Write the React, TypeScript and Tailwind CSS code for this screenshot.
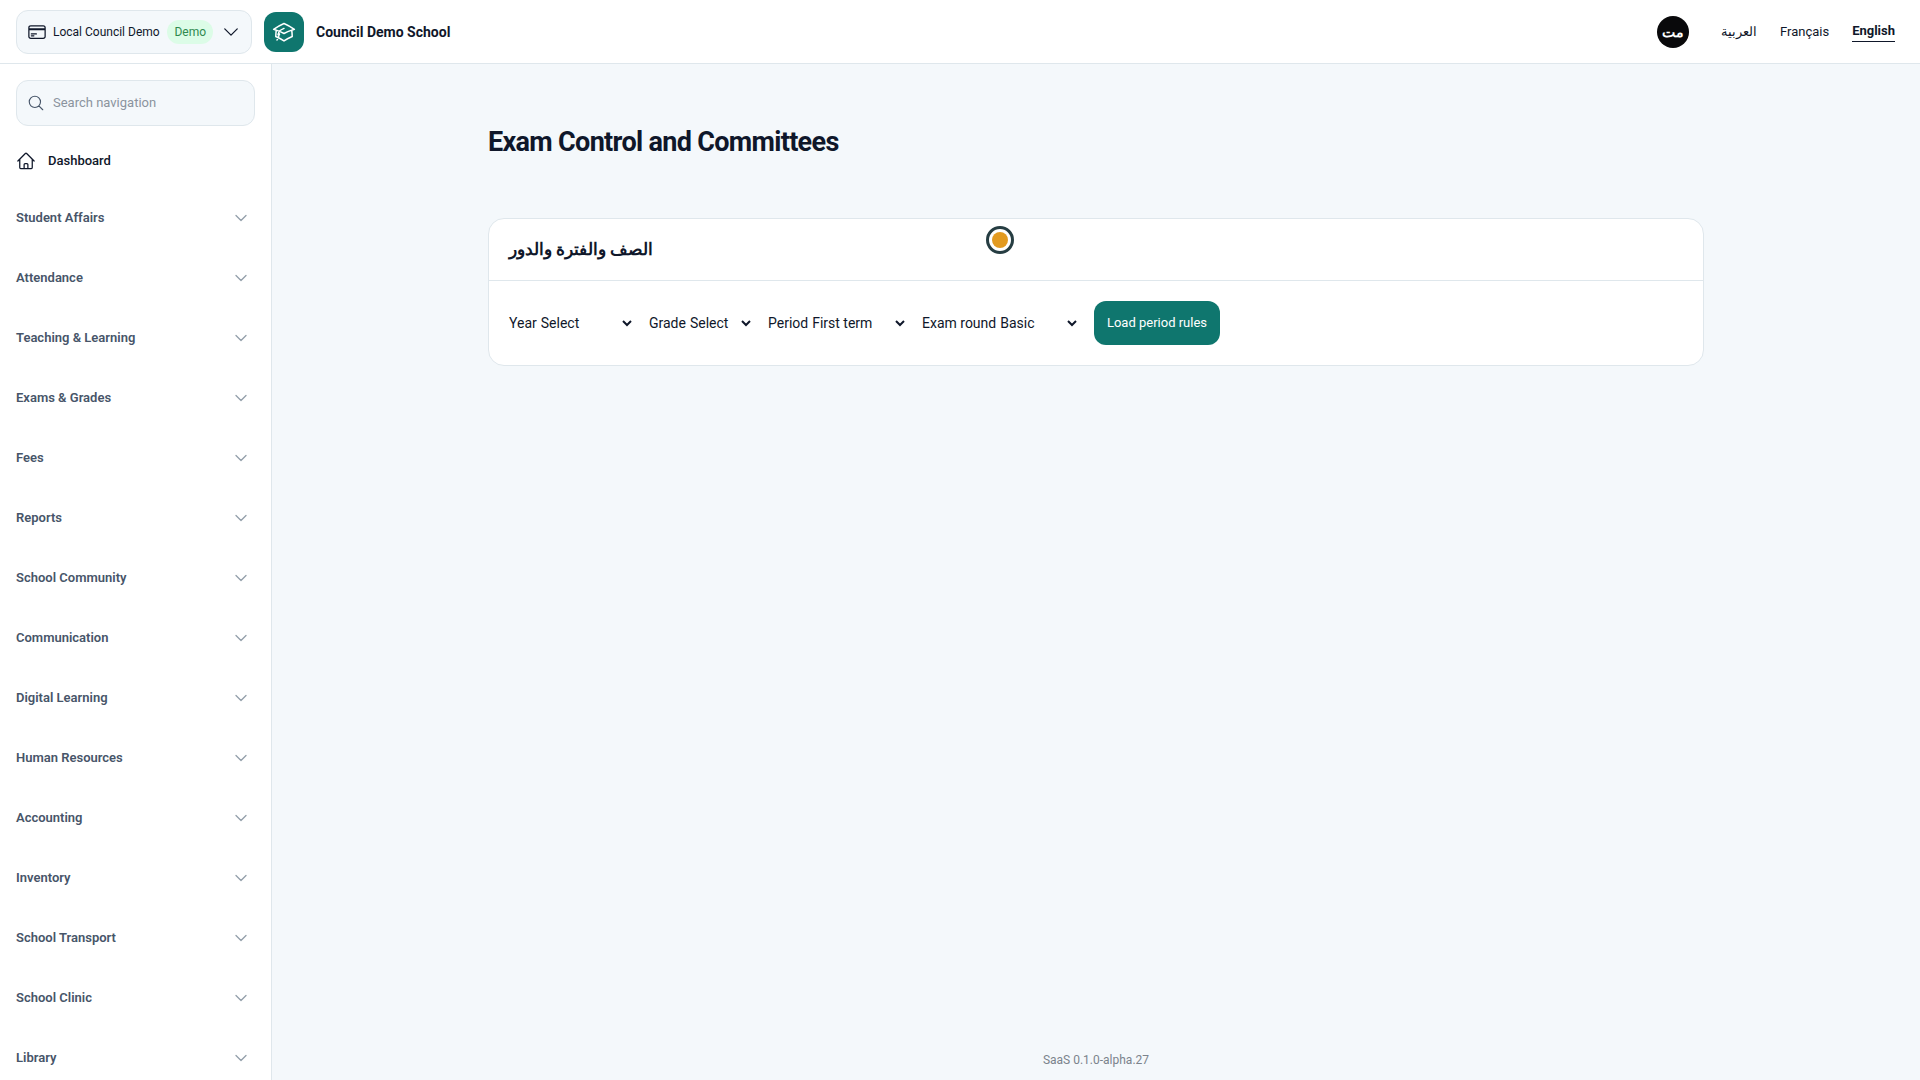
import {
  HiOutlineAcademicCap,
  HiOutlineChevronDown,
  HiOutlineCreditCard,
  HiOutlineHome,
  HiOutlineMagnifyingGlass,
} from "react-icons/hi2";

const navGroups = [
  "Student Affairs",
  "Attendance",
  "Teaching & Learning",
  "Exams & Grades",
  "Fees",
  "Reports",
  "School Community",
  "Communication",
  "Digital Learning",
  "Human Resources",
  "Accounting",
  "Inventory",
  "School Transport",
  "School Clinic",
  "Library",
];

const filters = [
  { id: "year", label: "Year", value: "Select", width: "w-[126px]" },
  { id: "grade", label: "Grade", value: "Select", width: "w-[105px]" },
  { id: "period", label: "Period", value: "First term", width: "w-[140px]" },
  { id: "round", label: "Exam round", value: "Basic", width: "w-[158px]" },
];

function Header() {
  return (
    <header className="flex h-16 shrink-0 items-center border-b border-[#dfe7ec] bg-white pl-4 pr-[25px]">
      <button
        type="button"
        className="flex h-11 w-[236px] items-center rounded-xl border border-[#dfe7ec] bg-[#f4f8fb] px-2.5"
      >
        <HiOutlineCreditCard className="size-5 shrink-0" />
        <span className="ml-1.5 whitespace-nowrap text-xs">
          Local Council Demo
        </span>
        <span className="ml-auto rounded-full bg-[#dcfce7] px-[7px] py-1 text-xs text-[#2f8a4f]">
          Demo
        </span>
        <HiOutlineChevronDown className="ml-2 size-5 shrink-0" />
      </button>
      <div className="ml-3 flex items-center gap-3">
        <span className="flex size-10 items-center justify-center rounded-xl bg-[#0f766e] text-white">
          <HiOutlineAcademicCap className="size-6" />
        </span>
        <span className="text-sm font-bold">Council Demo School</span>
      </div>
      <div className="ml-auto flex items-center">
        <button
          type="button"
          lang="ar"
          className="mr-8 flex size-8 items-center justify-center rounded-full bg-[#09090b] text-sm font-bold text-white"
        >
          مت
        </button>
        <nav className="flex items-center gap-[23px] text-[13px]">
          <a href="#ar" lang="ar">
            العربية
          </a>
          <a href="#fr">Français</a>
          <a href="#en" className="border-b border-[#0f172a] font-bold">
            English
          </a>
        </nav>
      </div>
    </header>
  );
}

function Sidebar() {
  return (
    <aside className="w-[272px] shrink-0 overflow-hidden border-r border-[#dfe7ec] bg-white px-4 pt-4">
      <label className="flex h-[46px] items-center gap-2 rounded-xl border border-[#dfe7ec] bg-[#f4f8fb] px-2.5">
        <HiOutlineMagnifyingGlass className="size-[18px] shrink-0 text-[#475569]" />
        <input
          type="search"
          aria-label="Search navigation"
          placeholder="Search navigation"
          className="w-full min-w-0 text-[13px] outline-none placeholder:text-[#8b949e]"
        />
      </label>
      <a
        href="#dashboard"
        className="mt-3 flex h-[46px] items-center gap-3 text-[13px] font-medium"
      >
        <HiOutlineHome className="size-5" />
        Dashboard
      </a>
      <nav className="mt-1">
        {navGroups.map((group) => (
          <button
            key={group}
            type="button"
            className="flex h-[60px] w-full items-center justify-between pr-1.5 text-[13px] font-semibold text-[#475569]"
          >
            {group}
            <HiOutlineChevronDown
              strokeWidth={2}
              className="size-4 text-[#94a0ab]"
            />
          </button>
        ))}
      </nav>
    </aside>
  );
}

function FilterCard() {
  return (
    <section className="relative rounded-2xl border border-[#dfe7ec] bg-white">
      <h2
        lang="ar"
        className="flex h-[62px] items-center border-b border-[#dfe7ec] px-5 text-[17px] font-bold"
      >
        الصف والفترة والدور
      </h2>
      <form className="flex flex-wrap items-center gap-[14px] p-5">
        {filters.map((filter) => (
          <div
            key={filter.id}
            className={`flex items-center text-sm ${filter.width}`}
          >
            <label htmlFor={filter.id} className="whitespace-nowrap">
              {filter.label}
            </label>
            <select id={filter.id} className="min-w-0 flex-1">
              <option>{filter.value}</option>
            </select>
          </div>
        ))}
        <button
          type="button"
          className="h-11 w-[126px] rounded-xl bg-[#0f766e] text-[13px] text-white"
        >
          Load period rules
        </button>
      </form>
      <span className="absolute left-[497px] top-[7px] flex size-7 items-center justify-center rounded-full border-3 border-[#263d42] bg-white">
        <span className="size-4 rounded-full bg-[#e29a20]" />
      </span>
    </section>
  );
}

export default function App() {
  return (
    <div className="flex h-screen flex-col bg-[#f4f8fb] font-['Roboto','Noto_Sans',sans-serif] text-[#0f172a]">
      <Header />
      <div className="flex min-h-0 flex-1">
        <Sidebar />
        <div className="flex flex-1 flex-col">
          <main className="mx-auto w-full max-w-7xl flex-1 px-8 pt-[58px]">
            <h1 className="mb-14 text-[27px] leading-10 font-bold tracking-tight">
              Exam Control and Committees
            </h1>
            <FilterCard />
          </main>
          <footer className="pb-3 text-center text-xs text-[#7b838c]">
            SaaS 0.1.0-alpha.27
          </footer>
        </div>
      </div>
    </div>
  );
}
